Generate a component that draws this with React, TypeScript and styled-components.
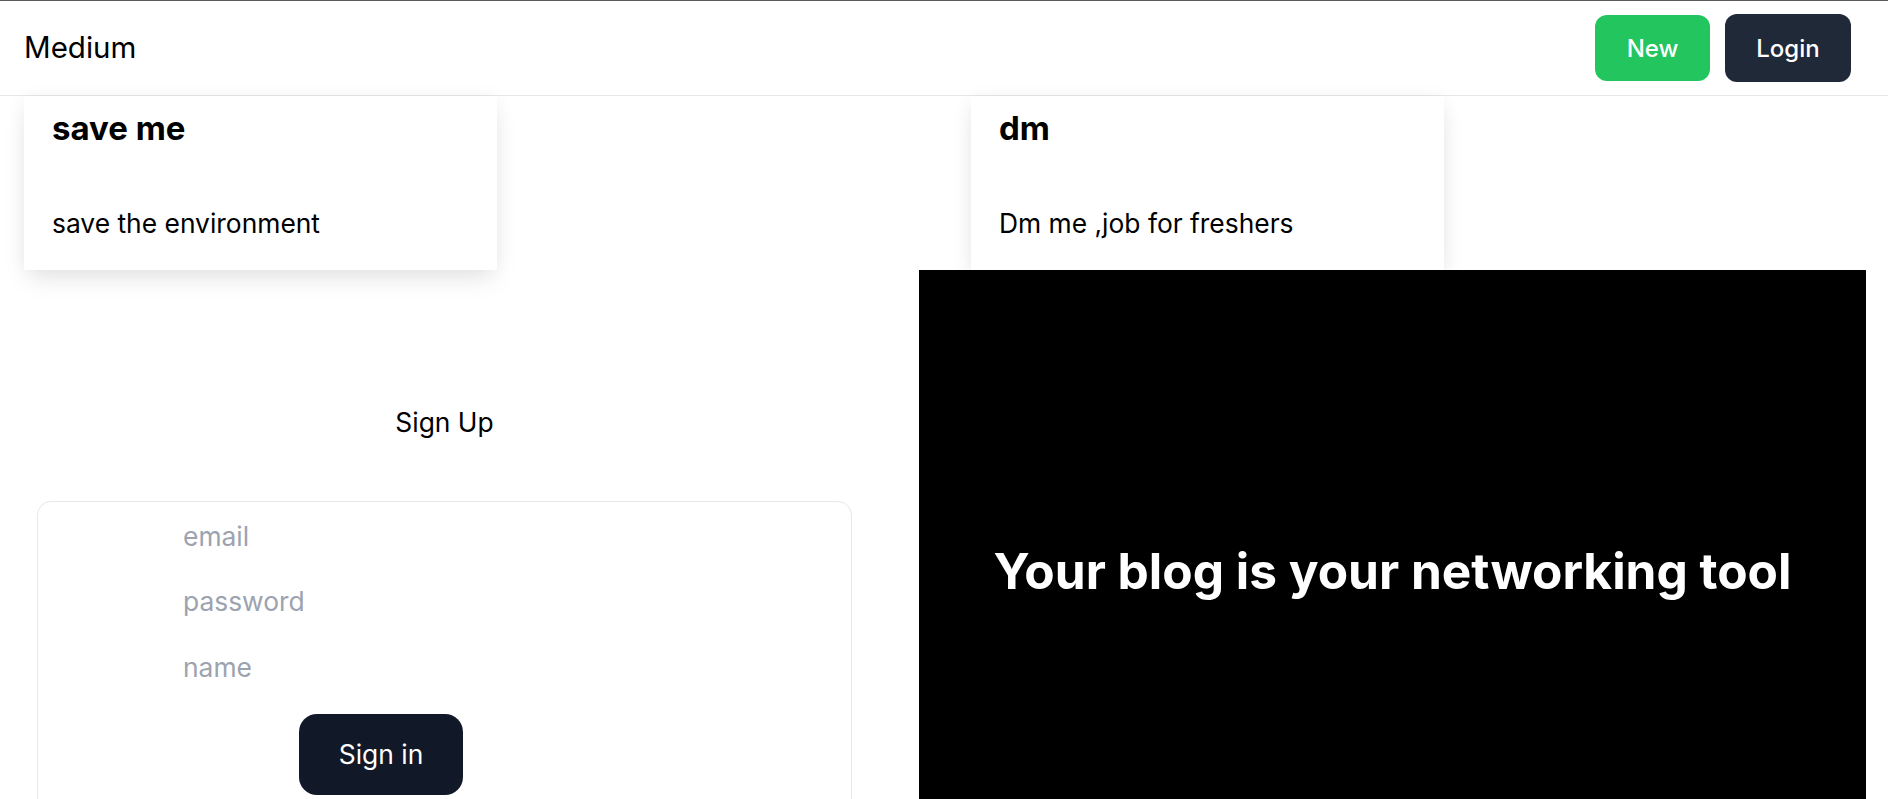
import React from "react";
import styled, { createGlobalStyle } from "styled-components";

const GlobalStyle = createGlobalStyle`
  * { box-sizing: border-box; }
  html, body { margin: 0; padding: 0; background: #ffffff; }
  body {
    font-family: Inter, "Noto Sans", "Liberation Sans", sans-serif;
    color: #000000;
    overflow: hidden;
  }
`;

const Page = styled.div`
  width: 1888px;
  min-height: 799px;
  background: #ffffff;
`;

const Header = styled.header`
  height: 96px;
  border-top: 1px solid #5a5a5a;
  border-bottom: 1px solid #e5e7eb;
  display: flex;
  align-items: center;
  justify-content: space-between;
  padding: 0 37px 0 24px;
  background: #ffffff;
`;

const Brand = styled.div`
  font-size: 29.5px;
  font-weight: 400;
  line-height: 1.2;
  color: #000000;
`;

const Actions = styled.div`
  display: flex;
  align-items: center;
  gap: 15px;
`;

const HeaderButton = styled.button<{ $variant: "green" | "dark" }>`
  border: none;
  font-family: inherit;
  font-size: 24px;
  font-weight: 500;
  color: #ffffff;
  border-radius: 12px;
  cursor: pointer;
  background: ${(p) => (p.$variant === "green" ? "#22c55e" : "#1f2937")};
  width: ${(p) => (p.$variant === "green" ? "115px" : "126px")};
  height: ${(p) => (p.$variant === "green" ? "66px" : "68px")};
`;

const CardGrid = styled.section`
  display: grid;
  grid-template-columns: 1fr 1fr;
  column-gap: 54px;
  padding: 0 24px;
`;

const Card = styled.article`
  width: 473px;
  background: #ffffff;
  padding: 12px 28px 27px;
  box-shadow: 0 12px 24px -4px rgba(0, 0, 0, 0.1), 0 0 18px rgba(0, 0, 0, 0.04);
`;

const CardTitle = styled.h2`
  margin: 0;
  font-size: 33px;
  line-height: 1.24;
  font-weight: 700;
  color: #000000;
`;

const CardBody = styled.p`
  margin: 55px 0 0;
  font-size: 26.4px;
  line-height: 39px;
  font-weight: 400;
  color: #000000;
`;

const Lower = styled.section`
  display: grid;
  grid-template-columns: 919px 1fr;
  padding-right: 22px;
`;

const AuthColumn = styled.div`
  width: 815px;
  margin-left: 37px;
  display: flex;
  flex-direction: column;
`;

const AuthHeading = styled.div`
  margin-top: 132px;
  text-align: center;
  font-size: 26.4px;
  line-height: 40.5px;
  color: #000000;
`;

const FormBox = styled.form`
  margin-top: 59px;
  border: 1px solid #e5e7eb;
  border-radius: 14px;
  padding: 1px 0 60px 145px;
  display: flex;
  flex-direction: column;
  align-items: flex-start;
`;

const Field = styled.input`
  width: 420px;
  border: none;
  outline: none;
  background: transparent;
  font-family: inherit;
  font-size: 26.4px;
  line-height: 40.5px;
  padding: 12.5px 0;
  color: #111827;
  &::placeholder { color: #9ca3af; }
`;

const SubmitButton = styled.button`
  margin: 14px 0 0 116px;
  width: 164px;
  height: 81px;
  border: none;
  border-radius: 18px;
  background: #111827;
  color: #ffffff;
  font-family: inherit;
  font-size: 26.4px;
  font-weight: 400;
  cursor: pointer;
`;

const Promo = styled.div`
  background: #000000;
  min-height: 604px;
  display: flex;
  align-items: center;
  justify-content: center;
`;

const PromoTitle = styled.h1`
  margin: 0;
  color: #ffffff;
  font-size: 49.6px;
  font-weight: 700;
  line-height: 1.2;
  text-align: center;
`;

const posts = [
  { title: "save me", body: "save the environment" },
  { title: "dm", body: "Dm me ,job for freshers" },
];

export default function App() {
  return (
    <Page>
      <GlobalStyle />
      <Header>
        <Brand>Medium</Brand>
        <Actions>
          <HeaderButton $variant="green">New</HeaderButton>
          <HeaderButton $variant="dark">Login</HeaderButton>
        </Actions>
      </Header>
      <CardGrid>
        {posts.map((p) => (
          <Card key={p.title}>
            <CardTitle>{p.title}</CardTitle>
            <CardBody>{p.body}</CardBody>
          </Card>
        ))}
      </CardGrid>
      <Lower>
        <AuthColumn>
          <AuthHeading>Sign Up</AuthHeading>
          <FormBox onSubmit={(e) => e.preventDefault()}>
            <Field placeholder="email" />
            <Field placeholder="password" type="password" />
            <Field placeholder="name" />
            <SubmitButton type="submit">Sign in</SubmitButton>
          </FormBox>
        </AuthColumn>
        <Promo>
          <PromoTitle>Your blog is your networking tool</PromoTitle>
        </Promo>
      </Lower>
    </Page>
  );
}
